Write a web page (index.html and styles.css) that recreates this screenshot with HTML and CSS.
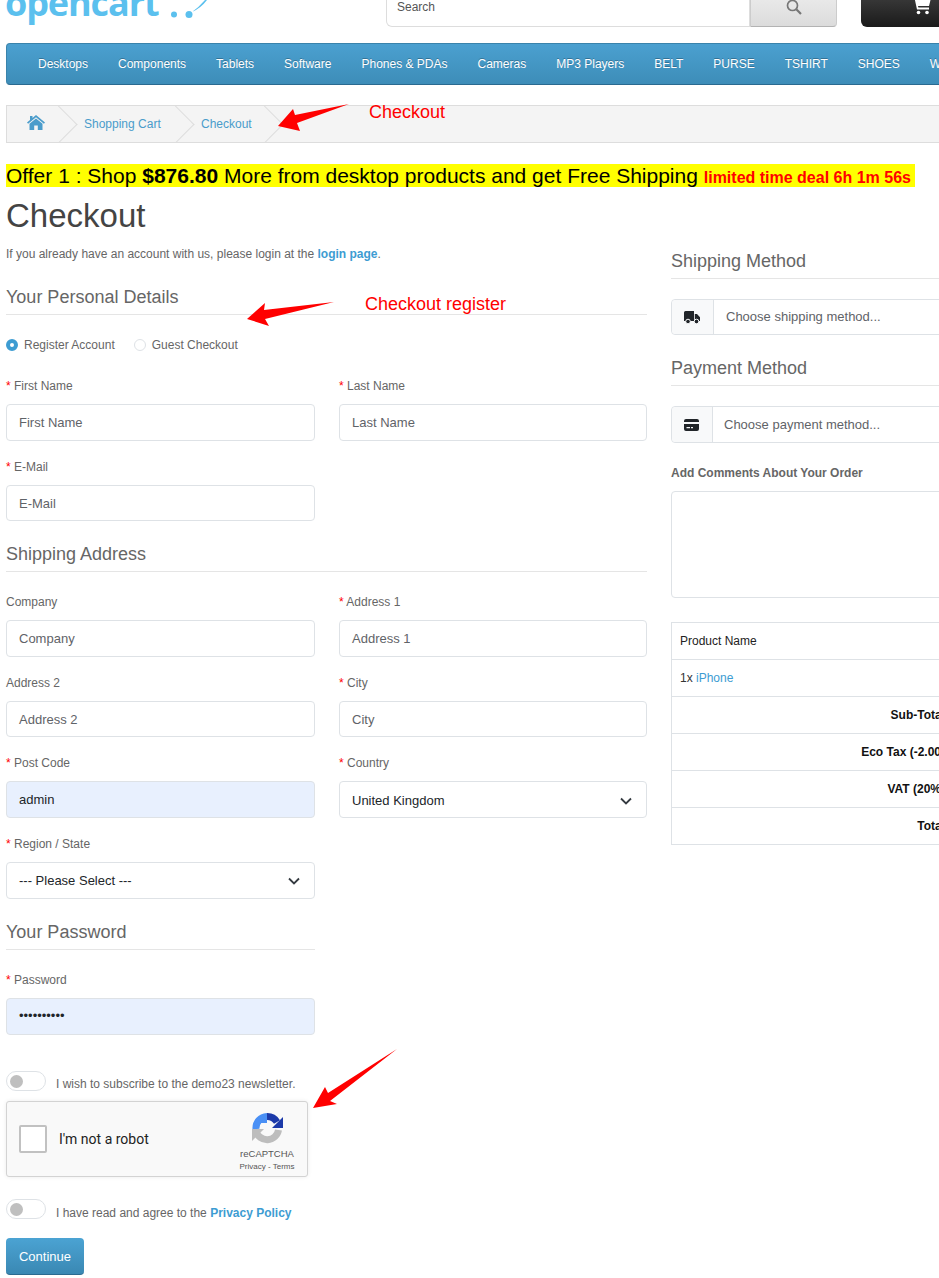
FILE: index.html
```html
<!DOCTYPE html>
<html lang="en">
<head>
<meta charset="utf-8">
<title>Checkout</title>
<link rel="stylesheet" href="styles.css">
</head>
<body>
<div class="page">
  <header class="top">
    <div class="logo"><span class="logo-word">opencart</span>
      <svg class="logo-marks" width="210" height="27" viewBox="0 0 210 27"><circle cx="174" cy="14.500" r="3" fill="#5bc0ee"/><circle cx="189" cy="14.500" r="3.500" fill="#5bc0ee"/><path d="M192 12Q199 7 205 0H207Q201 8 192 12Z" fill="#5bc0ee"/></svg>
    </div>
    <div class="search">
      <div class="search-input">Search</div>
      <div class="search-btn"><svg width="16" height="16" viewBox="0 0 16 16"><circle cx="6.500" cy="6.500" r="5" fill="none" stroke="#777" stroke-width="1.700"/><path d="M10.300 10.300L15 15" stroke="#777" stroke-width="2.200"/></svg></div>
    </div>
    <div class="cart"><svg width="20" height="20" viewBox="0 0 20 20"><path d="M0 1h3.500l.7 2H19l-2 8H6l.4 1.600H17V14.500H5L2.500 3H0Z" fill="#fff"/><circle cx="6.500" cy="17.500" r="1.800" fill="#fff"/><circle cx="15" cy="17.500" r="1.800" fill="#fff"/></svg></div>
  </header>

  <nav class="menu">
    <a>Desktops</a><a>Components</a><a>Tablets</a><a>Software</a><a>Phones &amp; PDAs</a><a>Cameras</a><a>MP3 Players</a><a>BELT</a><a>PURSE</a><a>TSHIRT</a><a>SHOES</a><a>WATCHES</a>
  </nav>

  <ul class="crumbs">
    <li class="crumb crumb-home"><svg width="18" height="15" viewBox="0 0 18 15"><path d="M9 0L18 7.600L16.900 8.800L9 2.300L1.100 8.800L0 7.600L3 5V1H5.500V3Z M9 3.500L15.500 8.800V15H10.800V10.500H7.200V15H2.500V8.800Z" fill="#4a9ccb"/></svg></li>
    <li class="crumb crumb-cart"><a>Shopping Cart</a></li>
    <li class="crumb crumb-check"><a>Checkout</a></li>
  </ul>

  <div class="offer"><span class="offer-mark">Offer 1 : Shop <b>$876.80</b> More from desktop products and get Free Shipping <strong class="deal">limited time deal 6h 1m 56s</strong></span></div>

  <h1 class="title">Checkout</h1>

  <div class="columns">
    <main class="left">
      <p class="intro">If you already have an account with us, please login at the <a class="strong-link">login page</a>.</p>

      <h2 class="legend legend-first">Your Personal Details</h2>
      <div class="radios">
        <label class="radio"><span class="dot dot-on"></span>Register Account</label>
        <label class="radio"><span class="dot"></span>Guest Checkout</label>
      </div>
      <div class="grid grid-personal">
        <div class="field"><label class="lab"><i>*</i> First Name</label><div class="input">First Name</div></div>
        <div class="field"><label class="lab"><i>*</i> Last Name</label><div class="input">Last Name</div></div>
        <div class="field"><label class="lab"><i>*</i> E-Mail</label><div class="input">E-Mail</div></div>
      </div>

      <h2 class="legend legend-ship">Shipping Address</h2>
      <div class="grid">
        <div class="field"><label class="lab">Company</label><div class="input">Company</div></div>
        <div class="field"><label class="lab"><i>*</i> Address 1</label><div class="input">Address 1</div></div>
        <div class="field"><label class="lab">Address 2</label><div class="input">Address 2</div></div>
        <div class="field"><label class="lab"><i>*</i> City</label><div class="input">City</div></div>
        <div class="field"><label class="lab"><i>*</i> Post Code</label><div class="input input-auto">admin</div></div>
        <div class="field"><label class="lab"><i>*</i> Country</label><div class="input input-dark input-select">United Kingdom<svg width="12" height="8" viewBox="0 0 12 8"><path d="M1 1.500L6 6.500L11 1.500" fill="none" stroke="#343a40" stroke-width="1.800"/></svg></div></div>
        <div class="field"><label class="lab"><i>*</i> Region / State</label><div class="input input-dark input-select">--- Please Select ---<svg width="12" height="8" viewBox="0 0 12 8"><path d="M1 1.500L6 6.500L11 1.500" fill="none" stroke="#343a40" stroke-width="1.800"/></svg></div></div>
      </div>

      <div class="half">
        <h2 class="legend legend-pass">Your Password</h2>
        <div class="field"><label class="lab"><i>*</i> Password</label><div class="input input-auto input-dots">••••••••••</div></div>
      </div>

      <div class="agree agree-news"><span class="toggle"></span><span>I wish to subscribe to the demo23 newsletter.</span></div>

      <div class="captcha">
        <span class="captcha-box"></span>
        <span class="captcha-text">I'm not a robot</span>
        <div class="captcha-brand">
          <svg width="31" height="32" viewBox="0 0 31 32">
            <path d="M4 17A11.500 11.500 0 0 1 15 4.500" fill="none" stroke="#4a90f5" stroke-width="7"/>
            <path d="M15 1V11H8Z" fill="#4a90f5"/>
            <path d="M15 4.500A11.500 11.500 0 0 1 25 10" fill="none" stroke="#1c3aa9" stroke-width="7"/>
            <path d="M20 16H31V5Z" fill="#1c3aa9"/>
            <path d="M26.500 18A11.500 11.500 0 0 1 4 19" fill="none" stroke="#bdbdbd" stroke-width="7"/>
            <path d="M0 17H12L0 29Z" fill="#bdbdbd"/>
          </svg>
          <span class="captcha-name">reCAPTCHA</span>
          <span class="captcha-links">Privacy - Terms</span>
        </div>
      </div>

      <div class="agree agree-policy"><span class="toggle"></span><span>I have read and agree to the <a class="strong-link">Privacy Policy</a></span></div>

      <button class="continue" type="button">Continue</button>
    </main>

    <aside class="right">
      <h2 class="legend legend-method">Shipping Method</h2>
      <div class="group">
        <span class="addon addon-ship"><svg width="16" height="13" viewBox="0 0 16 13"><path d="M0 1.500A1.500 1.500 0 0 1 1.500 0H10V10H0Z M10.800 3H13L16 6.200V10H10.800Z" fill="#212529"/><circle cx="4" cy="10.500" r="2.300" fill="#212529" stroke="#f8f9fa"/><circle cx="12.500" cy="10.500" r="2.300" fill="#212529" stroke="#f8f9fa"/></svg></span>
        <span class="group-text group-text-ship">Choose shipping method...</span>
      </div>
      <h2 class="legend legend-method legend-pay">Payment Method</h2>
      <div class="group group-pay">
        <span class="addon"><svg width="15" height="12" viewBox="0 0 15 12"><path d="M0 2A2 2 0 0 1 2 0H13A2 2 0 0 1 15 2V3H0Z M0 5H15V10A2 2 0 0 1 13 12H2A2 2 0 0 1 0 10Z" fill="#212529"/><path d="M2.500 8H6V9.300H2.500Z M7 8H9V9.300H7Z" fill="#f8f9fa"/></svg></span>
        <span class="group-text group-text-pay">Choose payment method...</span>
      </div>
      <label class="comment-label">Add Comments About Your Order</label>
      <div class="textarea"></div>
      <table class="summary">
        <colgroup><col class="col-name"><col></colgroup>
        <tbody>
          <tr><td class="cell-head">Product Name</td><td></td></tr>
          <tr><td>1x <a class="plain-link">iPhone</a></td><td></td></tr>
          <tr><td class="cell-total">Sub-Total:</td><td></td></tr>
          <tr><td class="cell-total">Eco Tax (-2.00):</td><td></td></tr>
          <tr><td class="cell-total">VAT (20%):</td><td></td></tr>
          <tr><td class="cell-total">Total:</td><td></td></tr>
        </tbody>
      </table>
    </aside>
  </div>

  <svg class="arrows" width="939" height="1278" viewBox="0 0 939 1278">
    <polygon points="349,104 295,115 293,109 278,126 300,131 297,123" fill="#f00"/>
    <polygon points="334,302 264,310 265,303 247,319 269,326 265,319" fill="#f00"/>
    <polygon points="397,1049 328,1093 325,1087 313,1108 337,1104 330,1101" fill="#f00"/>
  </svg>
  <span class="note note-a">Checkout</span>
  <span class="note note-b">Checkout register</span>
</div>
</body>
</html>
```

FILE: styles.css
```css
* { box-sizing: border-box; }
html, body { margin: 0; padding: 0; width: 939px; height: 1278px; overflow: hidden; background: #fff; }
body { font-family: "Liberation Sans", Arial, sans-serif; font-size: 12px; color: #666; }
.page { position: relative; width: 939px; height: 1278px; overflow: hidden; }
a { color: #3d9cd2; text-decoration: none; }

.top { display: flex; align-items: flex-end; height: 27px; }
.logo { position: relative; width: 380px; margin-left: 6px; height: 60px; flex: none; font-family: "Open Sans", sans-serif; font-weight: 700; color: #5bc0ee; line-height: 1; }
.logo-word { position: absolute; left: -1px; bottom: 6px; font-size: 36px; letter-spacing: -1.1px; }
.logo-marks { position: absolute; left: -6px; bottom: 0; overflow: visible; }
.search { display: flex; flex: none; width: 451px; height: 40px; }
.search-input { flex: none; width: 364px; height: 40px; padding: 0 10px 12px; border: 1px solid #ddd; border-top: 0; border-radius: 0 0 0 6px; background: #fff; font-size: 12px; color: #555; display: flex; align-items: flex-end; }
.search-btn { flex: none; width: 87px; height: 40px; border: 1px solid #ccc; border-bottom-color: #b3b3b3; border-radius: 0 0 4px 0; background: linear-gradient(#eee, #dcdcdc); display: flex; align-items: flex-end; justify-content: center; padding-bottom: 11px; }
.cart { flex: none; width: 90px; height: 40px; margin-left: 24px; border-radius: 0 0 0 6px; background: linear-gradient(#444, #1a1a1a); padding: 8px 0 0 51px; }
.cart svg { display: block; }

.menu { display: flex; margin: 16px 0 0 6px; width: 1158px; height: 42px; padding: 0 16px; align-items: center; border-radius: 4px; border: 1px solid #3a83ab; border-bottom-color: #2a6a90; background: linear-gradient(#4ba0d0, #3d8db8); }
.menu a { padding: 0 15px; color: #fff; font-size: 12px; text-shadow: 0 -1px 0 rgba(0,0,0,.25); white-space: nowrap; }

.crumbs { display: flex; list-style: none; margin: 20px 0 0 6px; padding: 0; width: 1158px; height: 38px; background: #f4f4f4; border: 1px solid #ddd; overflow: hidden; }
.crumb { position: relative; height: 36px; display: flex; align-items: center; flex: none; }
.crumb::after { content: ""; position: absolute; top: 0; right: 0; width: 26px; height: 26px; border-top: 1px solid #ddd; border-right: 1px solid #ddd; transform: translate(-2px, 5px) rotate(45deg); }
.crumb-home { width: 67px; padding-left: 20px; }
.crumb-home svg { display: block; margin-top: -3px; }
.crumb-cart { width: 117px; padding-left: 10px; }
.crumb-check { width: 89px; padding-left: 10px; }
.crumb a { font-size: 12px; color: #4a9ccb; white-space: nowrap; }

.offer { margin: 21px 0 0 6px; height: 23px; font-size: 21px; line-height: 24px; color: #000; white-space: nowrap; }
.offer-mark { display: inline-block; background: #ff0; height: 23px; padding-right: 4px; }
.deal { font-size: 16px; color: #f00; }

.title { margin: 11px 0 0 6px; font-size: 33px; line-height: 36px; font-weight: 400; color: #444; }

.columns { display: grid; grid-template-columns: 641px 493px; column-gap: 24px; margin-left: 6px; width: 1158px; }
.left, .right { min-width: 0; }
.intro { margin: 11px 0 0; font-size: 12px; line-height: 18px; color: #666; }
.strong-link { font-weight: 700; }

.legend { margin: 0; font-size: 18px; line-height: 24px; font-weight: 400; color: #666; padding-bottom: 5px; border-bottom: 1px solid #e5e5e5; }
.legend-first { margin-top: 22px; }
.legend-ship { margin-top: 3px; }
.legend-pass { margin-top: 3.33px; }
.legend-method { margin-top: 15px; }
.legend-pay { margin-top: 21px; }

.radios { display: flex; gap: 19px; margin-top: 20px; height: 20px; align-items: center; }
.radio { display: flex; align-items: center; gap: 6px; white-space: nowrap; }
.dot { width: 12px; height: 12px; border-radius: 50%; border: 1px solid #dee2e6; background: #fff; flex: none; }
.dot-on { border: 4px solid #3d9cd2; }

.grid { display: grid; grid-template-columns: 309px 308px; column-gap: 24px; row-gap: 0; margin-top: 21.67px; }
.grid-personal { margin-top: 23px; }
.field { height: 80.67px; }
.lab { display: block; height: 17px; line-height: 17px; color: #666; }
.lab i { color: #f00; font-style: normal; }
.input { margin-top: 9px; height: 36.67px; padding: 0 12px; border: 1px solid #dee2e6; border-radius: 4px; background: #fff; font-size: 13px; line-height: 36px; color: #5f6368; }
.input-auto { background: #e8f0fe; color: #212529; }
.input-dots { font-size: 13px; line-height: 34.67px; }
.input-dark { color: #212529; }
.input-select { display: flex; justify-content: space-between; align-items: center; padding: 2px 14px 0 12px; }

.half { width: 309px; }
.half .field { height: auto; margin-top: 22px; }
.agree { display: flex; align-items: center; gap: 10px; white-space: nowrap; }
.agree-news { margin-top: 36px; height: 20px; }
.agree-policy { margin-top: 22px; height: 20px; }
.agree > span:last-child { padding-top: 7px; }
.toggle { position: relative; width: 40px; height: 20px; flex: none; border: 1px solid #dee2e6; border-radius: 10px; background: #fff; }
.toggle::before { content: ""; position: absolute; left: 3px; top: 3px; width: 13px; height: 13px; border-radius: 50%; background: #bfbfbf; }

.captcha { position: relative; display: flex; align-items: center; margin-top: 10.5px; width: 302px; height: 76px; border: 1px solid #d3d3d3; border-radius: 3px; background: #f9f9f9; box-shadow: 0 0 4px rgba(0,0,0,.08); }
.captcha-box { flex: none; width: 28px; height: 28px; margin-left: 12px; border: 2px solid #c1c1c1; border-radius: 2px; background: #fff; }
.captcha-text { margin-left: 12px; font-family: Roboto, sans-serif; font-size: 14px; color: #222; white-space: nowrap; }
.captcha-brand { position: absolute; right: 10px; top: 10px; width: 60px; display: flex; flex-direction: column; align-items: center; }
.captcha-brand svg { display: block; }
.captcha-name { margin-top: 4px; font-size: 9.5px; line-height: 12px; color: #555; }
.captcha-links { margin-top: 1px; font-size: 8px; line-height: 11px; color: #555; white-space: nowrap; }

.continue { display: block; margin: 19px 0 0; width: 78px; height: 37px; padding: 0; border: 0; border-bottom: 1px solid #2a6a90; border-radius: 4px; background: linear-gradient(#4ba3d3, #3a88b3); color: #fff; font-family: "Liberation Sans", Arial, sans-serif; font-size: 13px; }

.group { display: flex; align-items: center; margin-top: 20px; height: 36px; border: 1px solid #dee2e6; border-radius: 4px; background: #fff; }
.group-pay { height: 37px; }
.addon { display: flex; align-items: center; justify-content: center; flex: none; width: 41px; height: 100%; padding-right: 2px; background: #f8f9fa; border-right: 1px solid #dee2e6; border-radius: 4px 0 0 4px; }
.addon-ship { width: 42px; }
.group-text { font-size: 13px; color: #5f6368; white-space: nowrap; }
.group-text-ship { padding: 0 0 2px 12px; }
.group-text-pay { padding-left: 11px; }
.comment-label { display: block; margin-top: 22px; font-weight: 700; line-height: 17px; color: #666; }
.textarea { margin-top: 9px; height: 107px; border: 1px solid #dee2e6; border-radius: 4px; background: #fff; }
.summary { margin-top: 24px; width: 493px; border-collapse: collapse; table-layout: fixed; font-size: 12px; color: #333; }
.col-name { width: 287px; }
.summary td { height: 37px; padding: 0 9px 0 8px; border: 1px solid #dee2e6; white-space: nowrap; }
.cell-head { color: #222; }
.cell-total { text-align: right; font-weight: 700; color: #111; }
.plain-link { color: #3d9cd2; }

.arrows { position: absolute; left: 0; top: 0; pointer-events: none; }
.note { position: absolute; font-size: 18px; line-height: 20px; color: #f00; white-space: nowrap; }
.note-a { left: 369px; top: 102px; }
.note-b { left: 365px; top: 294px; }
```
